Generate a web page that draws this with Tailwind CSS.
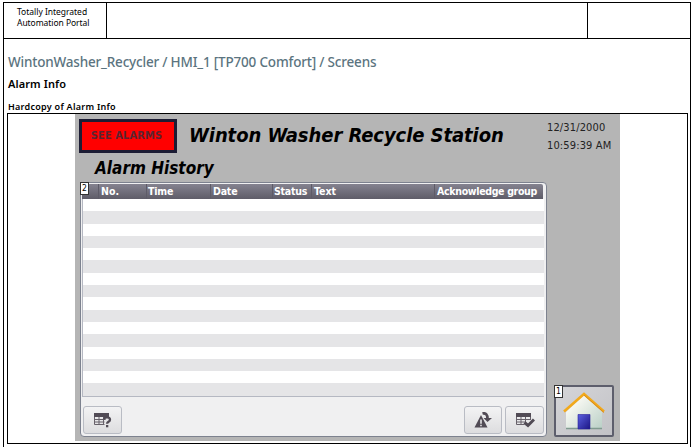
<!DOCTYPE html>
<html lang="en">
<head>
<meta charset="utf-8">
<title>Alarm Info</title>
<script src="https://cdn.jsdelivr.net/npm/@tailwindcss/browser@4"></script>
</head>
<body class="bg-white text-black overflow-hidden font-['Noto_Sans',sans-serif]">
<div class="ml-[3px] mt-[2px] w-[688px] h-[445px] border border-b-0 border-black flex flex-col whitespace-nowrap">
  <header class="h-[36px] shrink-0 border-b border-black flex">
    <div class="w-[103px] border-r border-black pl-[13px] pt-[3px] text-[8.5px] leading-[11px]">
      <div><span class="tracking-[-0.02px]">Totally Integrated</span></div>
      <div><span class="tracking-[-0.05px]">Automation Portal</span></div>
    </div>
    <div class="flex-1"></div>
    <div class="w-[103px] border-l border-black"></div>
  </header>
  <h1 class="pl-[4px] mt-[14px] h-[18px] leading-[18px] text-[13.5px] font-[550] tracking-[-0.19px] text-[#5b7480]"><span>WintonWasher_Recycler / HMI_1 [TP700 Comfort] / Screens</span></h1>
  <h2 class="pl-[4px] mt-[5px] h-[16px] leading-[16px] text-[11px] font-semibold tracking-[0.1px]">Alarm Info</h2>
  <h3 class="pl-[4px] mt-[9px] h-[12px] leading-[12px] text-[9px] font-semibold tracking-[0.26px]">Hardcopy of Alarm Info</h3>
  <main class="ml-[3px] w-[681px] h-[331px] border border-black pl-[67px]">
    <div class="w-[545px] h-[327px] bg-[#b5b5b5] flex font-['DejaVu_Sans_Condensed','DejaVu_Sans',sans-serif]">
      <div class="w-[471px] pl-[5px]">
        <div class="flex pt-[5px] h-[39px]">
          <div class="-ml-px w-[98px] h-[34px] border-[3px] border-[#1c1c34] bg-[#f00] flex items-center justify-center text-[11px] font-bold text-[#5c2430]"><span class="mr-[3px] tracking-[0.1px]">SEE ALARMS</span></div>
          <div class="ml-[12px] h-[32px] leading-[32px] text-[20px] font-bold italic tracking-[-0.07px]"><span>Winton Washer Recycle Station</span></div>
        </div>
        <div class="pl-[15px] h-[29px] leading-[30px] text-[17px] font-bold italic"><span>Alarm History</span></div>
        <section class="relative w-[467px] h-[255px] rounded-[4px] border border-[#7d828f] bg-[#f0f0f1] pt-[1px] px-[1px]">
          <div class="h-[15px] flex bg-linear-to-b from-[#858390] to-[#5e5c68] text-[#fff] text-[10.5px] font-bold leading-[15px] rounded-tr-[2px] mr-[2px]">
            <div class="w-[17px] border-r border-[#5d5b68]"></div>
            <div class="w-[48px] pl-[2px] border-r border-[#5d5b68]">No.</div>
            <div class="w-[64px] pl-[1px] border-r border-[#5d5b68] tracking-[-0.2px]">Time</div>
            <div class="w-[62px] pl-[2px] border-r border-[#5d5b68] tracking-[-0.2px]">Date</div>
            <div class="w-[39px] pl-[1px] border-r border-[#5d5b68] tracking-[-0.25px]">Status</div>
            <div class="w-[123px] pl-[2px] border-r border-[#5d5b68]">Text</div>
            <div class="flex-1 pl-[2px] tracking-[-0.32px]">Acknowledge group</div>
          </div>
          <div class="h-[198px] mr-px border-b border-l border-[#b5b8c2] bg-[repeating-linear-gradient(to_bottom,#fff_0,#fff_12.3px,#e5e5e7_12.3px,#e5e5e7_24.6px)]"></div>
          <div class="flex pt-[9px] pl-px pr-[1px]">
            <div class="w-[39px] h-[28px] rounded-[3px] border border-[#b9bcc4] bg-linear-to-b from-[#f3f3f4] to-[#dddddf] flex items-center justify-center">
              <svg width="19" height="16" viewBox="0 0 19 16"><path d="M1 1h15v4H1z" fill="#514b55"/><path d="M1.500 5v7.500h10M1.500 7.500h11M1.500 10h10M6 5v7.500M10.500 5v7.500" fill="none" stroke="#67616a"/><path d="M11 7.500c.4-2.900 6-2.700 6 .3 0 2.300-2.900 1.800-2.900 4" fill="none" stroke="#514b55" stroke-width="2.300"/><path d="M13 13h2.300v2.300H13z" fill="#514b55"/></svg>
            </div>
            <div class="flex-1"></div>
            <div class="w-[38px] h-[28px] rounded-[3px] border border-[#b9bcc4] bg-linear-to-b from-[#f3f3f4] to-[#dddddf] flex items-center justify-center">
              <svg width="18" height="17" viewBox="0 0 18 17"><path d="M7 3l6.500 12.500H.5z" fill="#514b55"/><path d="M7 7.500v4.300M7 12.800v1.500" stroke="#eee" stroke-width="1.500"/><path d="M8.500 1.500c3.500-.9 5 1.500 5 5" fill="none" stroke="#514b55" stroke-width="2.700"/><path d="M9.500 6H18l-4.500 4z" fill="#514b55"/></svg>
            </div>
            <div class="ml-[3px] w-[39px] h-[28px] rounded-[3px] border border-[#b9bcc4] bg-linear-to-b from-[#f3f3f4] to-[#dddddf] flex items-center justify-center">
              <svg width="20" height="16" viewBox="0 0 20 16"><path d="M1 1h15v4H1z" fill="#514b55"/><path d="M1.500 5v7.500h8M1.500 7.500h14M1.500 10h9M6 5v7.500M10.500 5v5.500M15.500 5v3" fill="none" stroke="#67616a"/><path d="M9.500 10.500l3.500 3 6-6" fill="none" stroke="#514b55" stroke-width="3"/></svg>
            </div>
          </div>
          <div class="absolute -left-px -top-px w-[9px] h-[13px] border border-[#333] bg-white text-[8.5px] leading-[11px] flex justify-center">2</div>
        </section>
      </div>
      <div class="flex-1 flex flex-col">
        <div class="pl-[1px] pt-[5px] text-[11px] leading-[18px] text-[#222] tracking-[0.13px]">
          <div><span>12/31/2000</span></div>
          <div><span>10:59:39 AM</span></div>
        </div>
        <div class="relative mt-auto mb-[4px] ml-[8px] w-[60px] h-[52px] rounded-[2px] border-2 border-[#5d5e6c] bg-linear-to-br from-[#d5d5d8] to-[#c2c2c6]">
          <svg class="block" width="56" height="48" viewBox="0 0 56 48">
            <defs><linearGradient id="wall" x1="0" y1="0" x2="1" y2="1"><stop offset=".2" stop-color="#fafaf4"/><stop offset="1" stop-color="#b9cfc6"/></linearGradient><linearGradient id="door" x1="0" y1="0" x2="1" y2="1"><stop offset="0" stop-color="#5a5fe0"/><stop offset="1" stop-color="#1c1684"/></linearGradient></defs>
            <path d="M28 8L46 25v17H10V25z" fill="url(#wall)"/><path d="M10 41.500h36" stroke="#819b90" stroke-width="1.500"/>
            <path d="M8 24.500L28 7l20 17.500" fill="none" stroke="#f2a91b" stroke-width="2.500"/><path d="M28 7l20 17.500" stroke="#d98c1d" stroke-width="1" transform="translate(0 1)"/>
            <path d="M22 27.500h12v14.500H22z" fill="url(#door)" stroke="#28209a" stroke-width=".6"/>
          </svg>
          <div class="absolute -left-[2px] -top-[2px] w-[9px] h-[13px] border border-[#333] bg-white text-[8.5px] leading-[11px] flex justify-center">1</div>
        </div>
      </div>
    </div>
  </main>
</div>
</body>
</html>
